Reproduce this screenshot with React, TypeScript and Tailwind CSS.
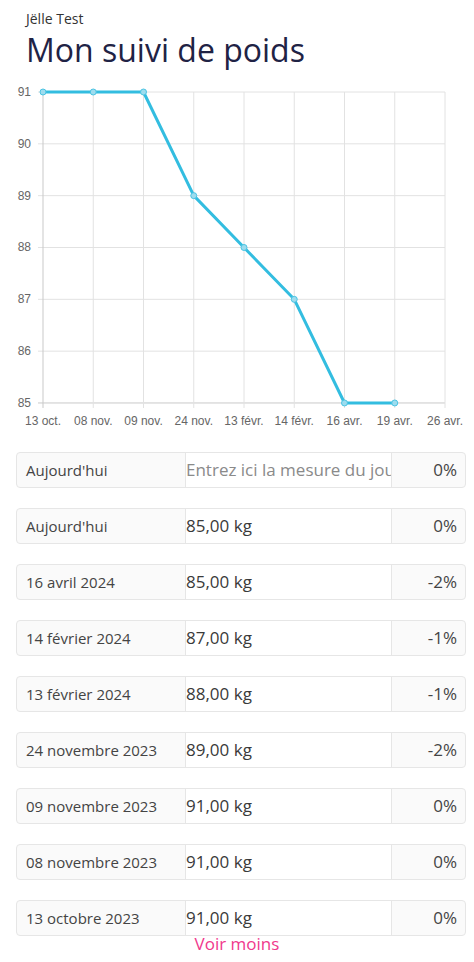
const font = { fontFamily: "'Open Sans', 'Liberation Sans', sans-serif" };

const xLabels = ["13 oct.", "08 nov.", "09 nov.", "24 nov.", "13 févr.", "14 févr.", "16 avr.", "19 avr.", "26 avr."];
const yTicks = [91, 90, 89, 88, 87, 86, 85];
const points = [91, 91, 91, 89, 88, 87, 85, 85];

const rows = [
  { date: "Aujourd'hui", weight: "85,00 kg", delta: "0%" },
  { date: "16 avril 2024", weight: "85,00 kg", delta: "-2%" },
  { date: "14 février 2024", weight: "87,00 kg", delta: "-1%" },
  { date: "13 février 2024", weight: "88,00 kg", delta: "-1%" },
  { date: "24 novembre 2023", weight: "89,00 kg", delta: "-2%" },
  { date: "09 novembre 2023", weight: "91,00 kg", delta: "0%" },
  { date: "08 novembre 2023", weight: "91,00 kg", delta: "0%" },
  { date: "13 octobre 2023", weight: "91,00 kg", delta: "0%" },
];

const px = (i: number) => 43 + i * 50.25;
const py = (v: number) => 10 + (91 - v) * 51.83;

function WeightChart() {
  const line = points.map((v, i) => `${px(i)},${py(v)}`).join(" ");
  return (
    <svg width="474" height="352" className="block" style={{ fontFamily: "'Liberation Sans', Arial, sans-serif" }}>
      {yTicks.map((t) => (
        <g key={t}>
          <line x1="38" x2="445" y1={py(t)} y2={py(t)} stroke={t === 85 ? "#c9c9c9" : "#e2e2e2"} strokeWidth="1" />
          <text x="31" y={py(t) + 4} textAnchor="end" fontSize="12" fill="#666">{t}</text>
        </g>
      ))}
      {xLabels.map((l, i) => (
        <g key={l}>
          <line x1={px(i)} x2={px(i)} y1={py(91)} y2={py(85) + 5} stroke={i === 0 ? "#c9c9c9" : "#e2e2e2"} strokeWidth="1" />
          <text x={px(i)} y="343" textAnchor="middle" fontSize="12" fill="#666">{l}</text>
        </g>
      ))}
      <polyline points={line} fill="none" stroke="#33bde0" strokeWidth="3" strokeLinejoin="round" />
      {points.map((v, i) => (
        <circle key={i} cx={px(i)} cy={py(v)} r="3" fill="#9ddcee" stroke="#4cc4e3" strokeWidth="1" />
      ))}
    </svg>
  );
}

function Row({ date, weight, delta, input }: { date: string; weight?: string; delta: string; input?: boolean }) {
  return (
    <div className="flex h-9 overflow-hidden rounded border border-[#e6e6e6] bg-[#fafafa]">
      <div className="flex w-[168px] shrink-0 items-center pl-[9px] text-[15px] text-[#444]">{date}</div>
      <div className="flex w-[207px] shrink-0 items-center border-x border-[#e6e6e6] bg-white">
        {input ? (
          <input
            className="w-full bg-transparent text-[17px] text-[#333] outline-none placeholder:text-[#8a8a8a]"
            placeholder="Entrez ici la mesure du jour"
            style={font}
          />
        ) : (
          <span className="text-[17px] text-[#3a3a3a]">{weight}</span>
        )}
      </div>
      <div className="flex flex-1 items-center justify-end pr-[8px] text-[17px] text-[#444]">{delta}</div>
    </div>
  );
}

export default function App() {
  return (
    <div className="min-h-[962px] w-[474px] bg-white" style={font}>
      <div className="px-[26px] pt-[10px]">
        <p className="text-[14px] leading-[18px] text-[#333]">Jëlle Test</p>
        <h1 className="mt-[3px] text-[32px] leading-[38px] text-[#1f2345]">Mon suivi de poids</h1>
      </div>
      <div className="mt-[13px]">
        <WeightChart />
      </div>
      <div className="mt-[18px] flex flex-col gap-5 pl-4 pr-2">
        <Row date="Aujourd'hui" delta="0%" input />
        {rows.map((r) => (
          <Row key={r.date} date={r.date} weight={r.weight} delta={r.delta} />
        ))}
      </div>
      <div className="-mt-[2px] text-center text-[17px] leading-[20px] text-[#f0388c]">
        <a href="#">Voir moins</a>
      </div>
    </div>
  );
}
